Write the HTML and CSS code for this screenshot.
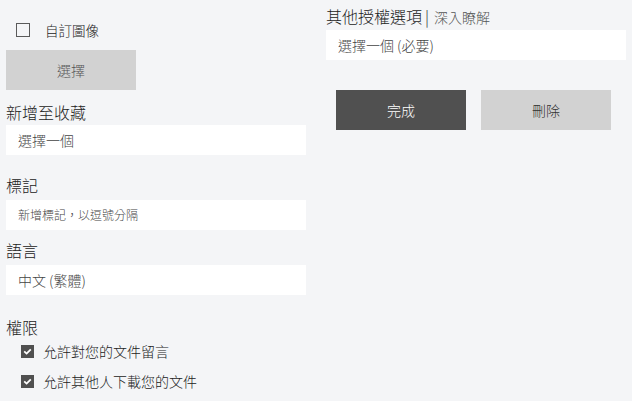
FILE: index.html
```html
<!DOCTYPE html>
<html lang="zh-Hant">
<head>
<meta charset="utf-8">
<link rel="stylesheet" href="styles.css">
</head>
<body>
<div class="page">
  <div class="col left">
    <label class="check-row first">
      <span class="box"></span>
      <span class="check-label">自訂圖像</span>
    </label>
    <div class="btn light">選擇</div>
    <div class="heading h1">新增至收藏</div>
    <div class="field">選擇一個</div>
    <div class="heading h2">標記</div>
    <div class="field small">新增標記，以逗號分隔</div>
    <div class="heading h3">語言</div>
    <div class="field">中文 (繁體)</div>
    <div class="heading h4">權限</div>
    <div class="perm">
      <span class="box checked"><svg viewBox="0 0 13 13" width="13" height="13"><path d="M3.2 6.4 L5.6 8.6 L9.8 4.4" fill="none" stroke="#fff" stroke-width="1.8"/></svg></span>
      <span class="perm-label">允許對您的文件留言</span>
    </div>
    <div class="perm">
      <span class="box checked"><svg viewBox="0 0 13 13" width="13" height="13"><path d="M3.2 6.4 L5.6 8.6 L9.8 4.4" fill="none" stroke="#fff" stroke-width="1.8"/></svg></span>
      <span class="perm-label">允許其他人下載您的文件</span>
    </div>
  </div>
  <div class="col right">
    <div class="heading hr">其他授權選項<span class="sep">|</span><span class="more">深入瞭解</span></div>
    <div class="field fr">選擇一個 (必要)</div>
    <div class="actions">
      <div class="btn dark">完成</div>
      <div class="btn light del">刪除</div>
    </div>
  </div>
</div>
</body>
</html>
```
FILE: styles.css
```css
html, body {
  margin: 0;
  padding: 0;
  background: #f4f5f7;
}
body {
  font-family: "Noto Sans CJK TC", "Noto Sans", sans-serif;
  font-weight: 300;
  color: #222;
  width: 632px;
  height: 401px;
  overflow: hidden;
}
.page {
  display: flex;
  gap: 20px;
  padding-left: 6px;
}
.col {
  width: 300px;
  display: flex;
  flex-direction: column;
}
.check-row {
  display: flex;
  align-items: center;
  height: 14px;
  margin-top: 23px;
  margin-left: 10px;
}
.box {
  box-sizing: border-box;
  width: 14px;
  height: 14px;
  border: 1px solid #5a5a5a;
  flex: none;
}
.check-label {
  margin-left: 15px;
  font-size: 13.5px;
  line-height: 14px;
}
.btn {
  width: 130px;
  height: 40px;
  display: flex;
  align-items: center;
  justify-content: center;
  font-size: 14px;
}
.btn.light {
  background: #d2d2d2;
  color: #555;
}
.btn.del {
  color: #333;
}
.btn.dark {
  background: #505050;
  color: #fff;
}
.left .btn {
  margin-top: 13px;
}
.heading {
  font-size: 16px;
  line-height: 20px;
  height: 20px;
  color: #222;
}
.h1 { margin-top: 12px; }
.h2 { margin-top: 20px; }
.h3 { margin-top: 10px; }
.h4 { margin-top: 22px; }
.field {
  box-sizing: border-box;
  height: 30px;
  background: #fff;
  padding-left: 12px;
  font-size: 14px;
  line-height: 30px;
  color: #444;
  margin-top: 3px;
}
.field.small {
  font-size: 12px;
}
.h2 + .field, .h3 + .field { margin-top: 5px; }
.perm {
  display: flex;
  align-items: center;
  height: 30px;
  margin-top: -1px;
  margin-bottom: 1px;
  margin-left: 15px;
}
.box.checked {
  width: 13px;
  height: 13px;
  border: none;
  background: #505050;
  display: flex;
}
.perm-label {
  margin-left: 9px;
  font-size: 14px;
}
.hr {
  margin-top: 6px;
}
.sep {
  margin: 0 5px 0 3px;
  color: #333;
}
.more {
  font-size: 14px;
  color: #555;
}
.fr {
  margin-top: 4px;
}
.actions {
  display: flex;
  gap: 15px;
  margin-top: 30px;
  margin-left: 10px;
}
```
